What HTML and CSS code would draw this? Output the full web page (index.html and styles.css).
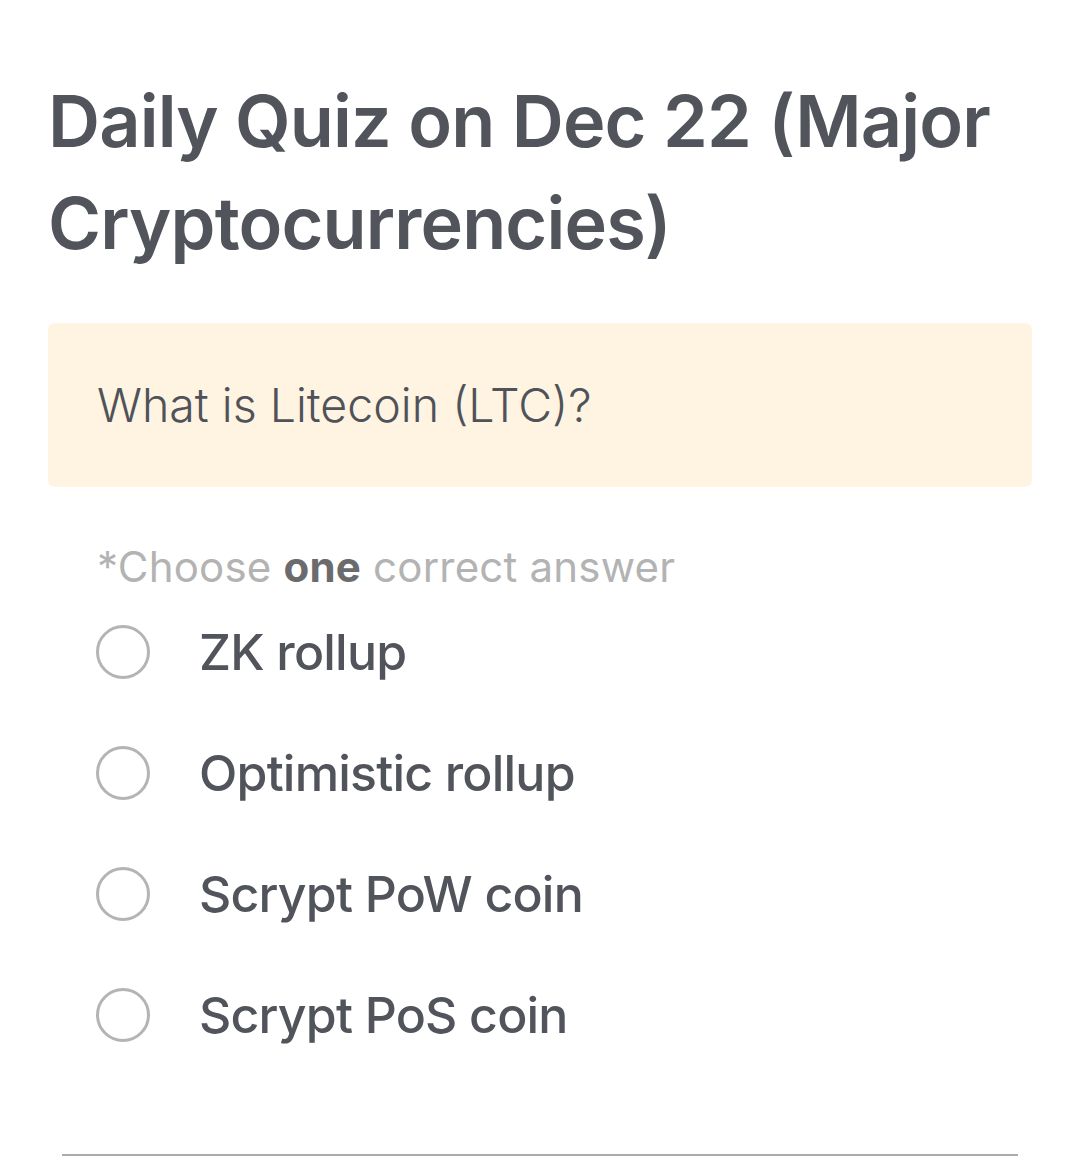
FILE: index.html
```html
<!DOCTYPE html>
<html lang="en">
<head>
<meta charset="utf-8">
<title>Daily Quiz</title>
<link rel="stylesheet" href="styles.css">
</head>
<body>
<main class="page">
  <h1 class="title">Daily Quiz on Dec 22 (Major Cryptocurrencies)</h1>
  <div class="question">What is Litecoin (LTC)?</div>
  <p class="hint">*Choose <b>one</b> correct answer</p>
  <ul class="options">
    <li class="option"><span class="radio"></span><span class="label">ZK rollup</span></li>
    <li class="option"><span class="radio"></span><span class="label">Optimistic rollup</span></li>
    <li class="option"><span class="radio"></span><span class="label">Scrypt PoW coin</span></li>
    <li class="option"><span class="radio"></span><span class="label">Scrypt PoS coin</span></li>
  </ul>
  <div class="divider"></div>
</main>
</body>
</html>
```
FILE: styles.css
```css
* { box-sizing: border-box; }
html, body { margin: 0; padding: 0; background: #ffffff; }
body { font-family: Inter, "Noto Sans", sans-serif; color: #52545c; }
.page {
  width: 1080px;
  height: 1156px;
  overflow: hidden;
  padding: 70px 48px 0 48px;
  display: flex;
  flex-direction: column;
}
.title {
  margin: 0;
  font-size: 72px;
  font-weight: 600;
  line-height: 102px;
  letter-spacing: -0.85px;
  color: #52545c;
}
.question {
  margin-top: 49px;
  height: 164px;
  flex: none;
  background: #fff4e1;
  border-radius: 7px;
  padding: 0 49px;
  display: flex;
  align-items: center;
  font-size: 46.5px;
  font-weight: 300;
  color: #505259;
}
.hint {
  margin: 56px 0 0 49px;
  font-size: 42px;
  line-height: 48px;
  font-weight: 400;
  letter-spacing: 0.2px;
  color: #b3b3b3;
}
.hint b { font-weight: 700; color: #6b6b6d; }
.options {
  list-style: none;
  margin: 0;
  padding: 0 0 0 48px;
}
.option {
  display: flex;
  align-items: center;
  height: 121px;
  gap: 49px;
}
.radio {
  width: 54px;
  height: 54px;
  border: 3px solid #b4b4b4;
  border-radius: 50%;
  flex: none;
}
.label {
  font-size: 50px;
  font-weight: 500;
  letter-spacing: -0.8px;
  color: #52545c;
}
.divider {
  margin: auto 14px 0 14px;
  height: 2px;
  background: #ababab;
}
```
